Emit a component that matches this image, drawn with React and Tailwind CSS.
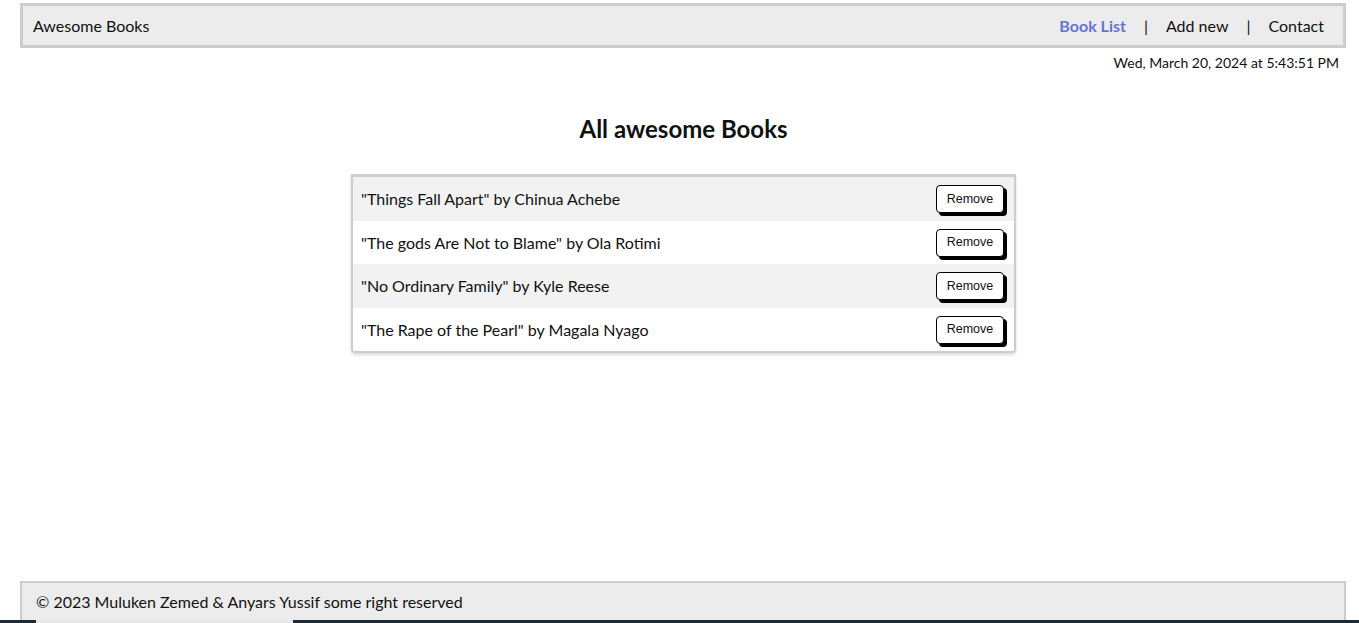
const books = [
  { title: 'Things Fall Apart', author: 'Chinua Achebe' },
  { title: 'The gods Are Not to Blame', author: 'Ola Rotimi' },
  { title: 'No Ordinary Family', author: 'Kyle Reese' },
  { title: 'The Rape of the Pearl', author: 'Magala Nyago' },
];

const App = () => {
  return (
    <div className="h-[623px] flex flex-col bg-white text-[#111] font-['Lato','Liberation_Sans',sans-serif] overflow-hidden">
      <header className="mt-[3px] ml-[20px] mr-[13px] h-[45px] flex items-center justify-between bg-[#ececec] border-[3px] border-[#cdcdcd] pl-[10px] pr-[19px]">
        <span className="text-[16px]">Awesome Books</span>
        <nav className="flex items-center text-[16px]">
          <a className="font-bold text-[#6673d6]">Book List</a>
          <span className="mx-[18px]">|</span>
          <a>Add new</a>
          <span className="mx-[18px]">|</span>
          <a>Contact</a>
        </nav>
      </header>

      <div className="flex justify-end pr-[20px] mt-[5px] text-[14px] leading-[20px]">
        Wed, March 20, 2024 at 5:43:51 PM
      </div>

      <h1 className="mt-[41px] pl-[8px] text-center text-[24px] font-bold leading-[30px]">All awesome Books</h1>

      <div className="self-center ml-[8px] mt-[30px] w-[665px] border-2 border-t-[3px] border-[#cdcdcd] rounded-b-[4px] shadow-[0_2px_3px_rgba(0,0,0,0.15)] overflow-hidden">
        {books.map((book, i) => (
          <div
            key={book.title}
            className={`h-[43.5px] flex items-center justify-between pl-[8px] pr-[7px] ${i % 2 === 0 ? 'bg-[#f3f2f2]' : 'bg-white'}`}
          >
            <span className="text-[16px] pt-[1px]">"{book.title}" by {book.author}</span>
            <button className="w-[68px] h-[28px] mr-[3px] mt-[1px] bg-white border border-black rounded-[4px] shadow-[3px_3px_0_#000] text-[12.5px] font-['Liberation_Sans',sans-serif]">
              Remove
            </button>
          </div>
        ))}
      </div>

      <footer className="mt-auto ml-[20px] mr-[13px] h-[39px] flex items-center bg-[#ececec] border-2 border-b-0 border-[#cdcdcd] pl-[14px] text-[16px]">
        © 2023 Muluken Zemed &amp; Anyars Yussif some right reserved
      </footer>
      <div className="h-[3px] flex bg-[#1e2a38]">
        <div className="ml-[36px] w-[257px] bg-[#e8e8e8]" />
      </div>
    </div>
  );
};

export default App;
